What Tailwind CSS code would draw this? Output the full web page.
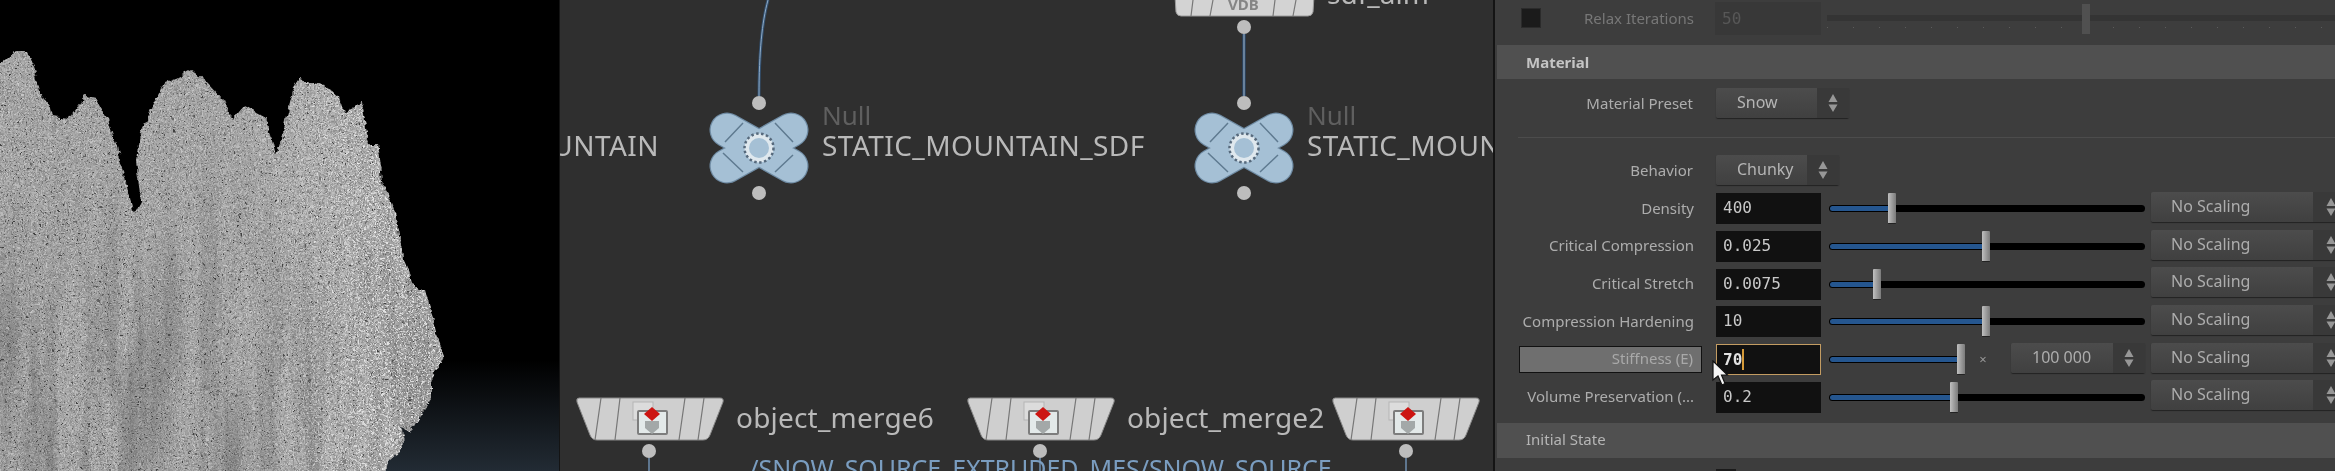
<!DOCTYPE html>
<html lang="en">
<head>
  <meta charset="UTF-8">
  <title>Houdini - Snow material</title>
  <script src="https://cdn.jsdelivr.net/npm/@tailwindcss/browser@4"></script>
</head>
<body class="bg-black overflow-hidden">
  <div class="flex w-[2335px] h-[471px] overflow-hidden blur-[0.4px] font-['Noto_Sans',sans-serif]">

    <!-- viewport -->
    <div class="w-[560px] h-full shrink-0 bg-black border-r border-[#141414]">
      <svg width="559" height="471" viewBox="0 0 559 471" class="block">
        <defs>
          <linearGradient id="floor" x1="0" y1="0" x2="0" y2="1">
            <stop offset="0" stop-color="#000"/>
            <stop offset="1" stop-color="#222b34"/>
          </linearGradient>
          <linearGradient id="shine" x1="0" y1="0" x2="1" y2="0">
            <stop offset="0.5" stop-color="#fff" stop-opacity="0"/>
            <stop offset="0.85" stop-color="#fff" stop-opacity="0.7"/>
          </linearGradient>
          <linearGradient id="fade" x1="0" y1="0" x2="0" y2="1">
            <stop offset="0.2" stop-color="#000" stop-opacity="0.05"/>
            <stop offset="0.75" stop-color="#000" stop-opacity="1"/>
          </linearGradient>
          <filter id="rough" x="-5%" y="-5%" width="110%" height="110%">
            <feTurbulence type="fractalNoise" baseFrequency="0.12" numOctaves="3" seed="3" result="wobble"/>
            <feDisplacementMap in="SourceGraphic" in2="wobble" scale="7" xChannelSelector="R" yChannelSelector="G"/>
          </filter>
          <filter id="grain" x="0" y="0" width="100%" height="100%" color-interpolation-filters="sRGB">
            <feTurbulence type="fractalNoise" baseFrequency="0.7" numOctaves="2" seed="4"/>
            <feColorMatrix type="matrix" values="1 0 0 0 0  1 0 0 0 0  1 0 0 0 0  0 0 0 0 1"/>
            <feComponentTransfer>
              <feFuncR type="linear" slope="0.5" intercept="0.4"/>
              <feFuncG type="linear" slope="0.5" intercept="0.4"/>
              <feFuncB type="linear" slope="0.5" intercept="0.4"/>
            </feComponentTransfer>
            <feComposite operator="in" in2="SourceAlpha"/>
          </filter>
          <filter id="specks" x="0" y="0" width="100%" height="100%" color-interpolation-filters="sRGB">
            <feTurbulence type="fractalNoise" baseFrequency="0.55" numOctaves="2" seed="14"/>
            <feColorMatrix type="matrix" values="0 0 0 0 0.25  0 0 0 0 0.25  0 0 0 0 0.25  7 0 0 0 -4.6"/>
            <feComposite operator="in" in2="SourceGraphic"/>
          </filter>
          <filter id="streaks" x="0" y="0" width="100%" height="100%" color-interpolation-filters="sRGB">
            <feTurbulence type="fractalNoise" baseFrequency="0.05 0.004" numOctaves="3" seed="9"/>
            <feColorMatrix type="matrix" values="0 0 0 0 0.25  0 0 0 0 0.25  0 0 0 0 0.25  0.9 0 0 0 -0.36"/>
            <feComposite operator="in" in2="SourceGraphic"/>
          </filter>
          <filter id="sparkle" x="0" y="0" width="100%" height="100%" color-interpolation-filters="sRGB">
            <feTurbulence type="fractalNoise" baseFrequency="0.6" numOctaves="2" seed="21"/>
            <feColorMatrix type="matrix" values="0 0 0 0 1  0 0 0 0 1  0 0 0 0 1  5 0 0 0 -2.5"/>
            <feComposite operator="in" in2="SourceGraphic"/>
          </filter>
          <polygon id="mountain" points="-8,72 15,52 27,52 34,67 40,92 50,107 52,116 69,118 86,96 96,98 107,117 117,147 134,215 141,202 136,160 140,133 165,82 176,78 191,70 207,82 224,100 233,119 245,105 266,117 276,155 283,133 293,90 299,80 312,83 325,85 339,97 344,113 362,103 369,145 377,145 383,187 396,213 404,257 415,287 425,290 444,357 431,380 431,400 410,432 402,428 404,447 387,463 383,480 -8,480"/>
        </defs>
        <rect x="0" y="360" width="559" height="111" fill="url(#floor)"/>
        <g filter="url(#rough)">
          <use href="#mountain" filter="url(#grain)"/>
          <use href="#mountain" fill="#000" filter="url(#specks)"/>
          <use href="#mountain" fill="url(#fade)" filter="url(#streaks)"/>
          <use href="#mountain" fill="url(#shine)" filter="url(#sparkle)"/>
        </g>
      </svg>
    </div>

    <!-- network editor: nodes sit on a free canvas -->
    <div class="relative w-[935px] h-full shrink-0 overflow-hidden bg-[#2f2f2f] border-r-2 border-[#141414] text-[#b9b9b9]">
      <svg width="933" height="471" viewBox="560 0 933 471" class="absolute left-0 top-0">
        <defs>
          <g id="nullnode">
            <path d="M-32 -18 L32 18 M32 -18 L-32 18" stroke="#6f8ba3" stroke-width="35" stroke-linecap="round"/>
            <path d="M-32 -18 L32 18 M32 -18 L-32 18" stroke="#a5c0d5" stroke-width="32.5" stroke-linecap="round"/>
            <path d="M-16 -25 L-34 -6 M16 -25 L34 -6 M-36 5 L-16 24 M34 7 L16 24" stroke="#5f7a90" stroke-width="1.5" fill="none"/>
            <circle r="14.5" fill="#dfe8ee" stroke="#56697c" stroke-width="2.5" stroke-dasharray="2.5 2.5"/>
            <circle r="10" fill="#a5c0d5"/>
          </g>
          <g id="mergenode">
            <path d="M3 0 H144 Q148 0 147 4 L134 37 Q132 42 127 42 H21 Q16 42 14 37 L1 4 Q0 0 3 0 Z" fill="#cfcfcf" stroke="#8a8a8a" stroke-width="1"/>
            <path d="M25 0 L19 42 M44 0 L39 42 M109 0 L103 42 M128 0 L122 42" stroke="#777" stroke-width="1.2" fill="none"/>
            <rect x="57" y="4" width="20" height="18" fill="#dcdcdc" stroke="#b5b5b5"/>
            <rect x="62" y="13" width="29" height="23" rx="1" fill="#e3e9e9" stroke="#7d7d7d" stroke-width="2"/>
            <path d="M69 23 H83 V30 L76 36 L69 30 Z" fill="#a3a8a8"/>
            <path d="M76 9 L84 16 L76 23 L68 16 Z" fill="#cc1512"/>
          </g>
        </defs>

        <path d="M759 96 C759 52 762 22 768 0" stroke="#33506f" stroke-width="3" fill="none"/>
        <path d="M759 96 C759 52 762 22 768 0" stroke="#8fabc6" stroke-width="1" fill="none"/>
        <path d="M1244 34 V96" stroke="#2b4767" stroke-width="3.5" fill="none"/>
        <path d="M1244 34 V96" stroke="#93aac2" stroke-width="1.2" fill="none"/>
        <path d="M649 458 V471 M1040 458 V471 M1406 458 V471" stroke="#6f8fb0" stroke-width="1.5" fill="none"/>

        <use href="#nullnode" x="759" y="148"/>
        <use href="#nullnode" x="1244" y="148"/>

        <path d="M1175 -4 H1314 L1313 12 Q1312 16 1308 16 H1181 Q1177 16 1176 12 Z" fill="#d3d3d3" stroke="#9a9a9a"/>
        <path d="M1193 0 L1191 16 M1213 0 L1210 16 M1275 0 L1273 16 M1296 0 L1293 16" stroke="#777" stroke-width="1.2" fill="none"/>

        <use href="#mergenode" x="576" y="398"/>
        <use href="#mergenode" x="967" y="398"/>
        <use href="#mergenode" x="1332" y="398"/>

        <g fill="#bdbdbd">
          <circle cx="759" cy="103" r="7"/>
          <circle cx="759" cy="193" r="7"/>
          <circle cx="1244" cy="27" r="7"/>
          <circle cx="1244" cy="103" r="7"/>
          <circle cx="1244" cy="193" r="7"/>
          <circle cx="649" cy="451" r="7"/>
          <circle cx="1040" cy="451" r="7"/>
          <circle cx="1406" cy="451" r="7"/>
        </g>
      </svg>

      <div class="absolute left-[-20px] top-[129px] w-[119px] text-[28px] leading-[32px] tracking-[0.45px] whitespace-nowrap overflow-hidden flex justify-end">STATIC_MOUNTAIN</div>
      <div class="absolute left-[262px] top-[101px] text-[26px] leading-[28px] text-[#5f5f5f]">Null</div>
      <div class="absolute left-[262px] top-[129px] text-[28px] leading-[32px] tracking-[0.45px] whitespace-nowrap">STATIC_MOUNTAIN_SDF</div>
      <div class="absolute left-[747px] top-[101px] text-[26px] leading-[28px] text-[#5f5f5f]">Null</div>
      <div class="absolute left-[747px] top-[129px] text-[28px] leading-[32px] tracking-[0.45px] whitespace-nowrap">STATIC_MOUNTAIN_SDF</div>
      <div class="absolute left-[767px] top-[-27px] text-[28px] leading-[40px] whitespace-nowrap">sdf_aim</div>
      <div class="absolute left-[668px] top-[-4px] text-[15px] leading-[16px] font-bold text-[#858585]">VDB</div>
      <div class="absolute left-[176px] top-[401px] text-[28px] leading-[32px] tracking-[0.2px] whitespace-nowrap">object_merge6</div>
      <div class="absolute left-[567px] top-[401px] text-[28px] leading-[32px] tracking-[0.15px] whitespace-nowrap">object_merge2</div>
      <div class="absolute left-[176px] top-[451px] text-[25px] leading-[34px] tracking-[-0.05px] whitespace-nowrap text-[#7a9dc0]">../SNOW_SOURCE_EXTRUDED_MES/SNOW_SOURCE</div>
    </div>

    <!-- parameter editor -->
    <div class="relative flex-1 h-full overflow-hidden bg-[#3d3d3d] text-[15px] text-[#adadad]">
      <div class="flex items-center h-[36px] pl-[26px]">
        <div class="shrink-0 w-5 h-5 bg-[#1b1b1b] border border-[#2b2b2b]"></div>
        <div class="shrink-0 w-[153px] text-right text-[#777]">Relax Iterations</div>
        <div class="shrink-0 ml-[21px] w-[106px] h-[33px] bg-[#383838] pl-[7px] leading-[33px] font-['DejaVu_Sans_Mono',monospace] text-[16px] text-[#575757]">50</div>
        <div class="relative shrink-0 ml-[6px] w-[600px] h-[30px]">
          <div class="absolute left-0 right-0 top-[12px] h-[6px] bg-[#343434]"></div>
          <div class="absolute left-0 right-0 top-[24px] h-px bg-[repeating-linear-gradient(90deg,#5c5c5c_0,#5c5c5c_1px,transparent_1px,transparent_26px)]"></div>
          <div class="absolute left-[255px] top-[1px] w-2 h-[30px] bg-[#505050]"></div>
        </div>
      </div>

      <div class="mt-[9px] ml-[2px] h-[34px] pl-[29px] bg-[#505050] leading-[34px] font-bold text-[#c4c4c4]">Material</div>

      <div class="flex items-center h-[30px] mt-[9px]">
        <div class="w-[198px] text-right">Material Preset</div>
        <div class="ml-[23px] flex w-[133px] h-[30px] rounded-[2px] bg-linear-to-b from-[#4c4c4c] to-[#404040] shadow-[0_1px_1px_#222]">
          <div class="flex-1 pl-[21px] leading-[28px] text-[16px] text-[#b5b5b5]">Snow</div>
          <div class="w-8 flex items-center justify-center bg-[#393939]">
            <svg width="10" height="20" viewBox="0 0 10 20"><path d="M5 1 L9.5 9 H0.5 Z M5 19 L9.5 11.5 H0.5 Z" fill="#979797"/></svg>
          </div>
        </div>
      </div>

      <div class="mt-[19px] ml-[23px] h-px bg-[#4c4c4c]"></div>

      <div class="flex items-center h-[30px] mt-[17px]">
        <div class="w-[198px] text-right">Behavior</div>
        <div class="ml-[23px] flex w-[123px] h-[30px] rounded-[2px] bg-linear-to-b from-[#4c4c4c] to-[#404040] shadow-[0_1px_1px_#222]">
          <div class="flex-1 pl-[21px] leading-[28px] text-[16px] text-[#b5b5b5]">Chunky</div>
          <div class="w-8 flex items-center justify-center bg-[#393939]">
            <svg width="10" height="20" viewBox="0 0 10 20"><path d="M5 1 L9.5 9 H0.5 Z M5 19 L9.5 11.5 H0.5 Z" fill="#979797"/></svg>
          </div>
        </div>
      </div>

      <div id="rows" class="mt-[5px]"></div>

      <div class="mt-[7px] ml-[2px] h-[35px] pl-[29px] bg-[#505050] leading-[33px] text-[#b5b5b5]">Initial State</div>
      <div class="mt-[11px] ml-[221px] w-5 h-5 bg-[#1b1b1b]"></div>

      <!-- mouse cursor -->
      <svg width="17" height="26" viewBox="0 0 17 26" class="absolute left-[217px] top-[360px]">
        <path d="M1 1 L1 20 L6 16 L10 25 L13 23.5 L9.5 15 L15.5 15 Z" fill="#f5f5f5" stroke="#111" stroke-width="1.2"/>
      </svg>
    </div>
  </div>

  <script>
    const params = [
      { label: "Density", value: "400", thumb: 65 },
      { label: "Critical Compression", value: "0.025", thumb: 159 },
      { label: "Critical Stretch", value: "0.0075", thumb: 50 },
      { label: "Compression Hardening", value: "10", thumb: 159 },
      { label: "Stiffness (E)", value: "70", thumb: 134, active: true },
      { label: "Volume Preservation (...", value: "0.2", thumb: 127 }
    ];

    const arrows = `<svg width="10" height="20" viewBox="0 0 10 20"><path d="M5 1 L9.5 9 H0.5 Z M5 19 L9.5 11.5 H0.5 Z" fill="#979797"/></svg>`;

    function dropdown(text, boxClass, pad, arrowClass) {
      return `<div class="flex ${boxClass} h-[30px] -mt-[4px] rounded-[2px] bg-linear-to-b from-[#4c4c4c] to-[#404040] shadow-[0_1px_1px_#222]">
        <div class="flex-1 ${pad} leading-[28px] text-[16px] text-[#adadad] whitespace-nowrap">${text}</div>
        <div class="${arrowClass} flex items-center justify-center bg-[#393939]">${arrows}</div>
      </div>`;
    }

    document.getElementById("rows").innerHTML = params.map(p => {
      const label = p.active
        ? `<div class="shrink-0 ml-[24px] w-[183px] h-[27px] pr-[8px] text-right leading-[23px] bg-[#6f6f6f] border border-[#111] text-[#a9a9a9]">${p.label}</div><div class="shrink-0 w-[14px]"></div>`
        : `<div class="shrink-0 w-[199px] text-right whitespace-nowrap -mt-[2px]">${p.label}</div><div class="shrink-0 w-[22px]"></div>`;
      const input = p.active
        ? `<div class="shrink-0 flex items-center w-[105px] h-[31px] pl-[6px] bg-[#111] border border-[#c39c62] font-['DejaVu_Sans_Mono',monospace] font-bold text-[16px] text-[#e2e2e2]">${p.value}<span class="w-[2px] h-[21px] bg-[#d59a3a]"></span></div>`
        : `<div class="shrink-0 w-[105px] h-[31px] pl-[7px] leading-[29px] bg-[#111] font-['DejaVu_Sans_Mono',monospace] text-[16px] text-[#c9c9c9]">${p.value}</div>`;
      const sliderWidth = p.active ? 138 : 318;
      const slider = `<div class="relative shrink-0 ml-[6px] h-[31px]" style="width:${sliderWidth}px">
        <div class="absolute left-[2px] right-0 top-[12px] h-[7px] rounded-full bg-black"></div>
        <div class="absolute left-[3px] top-[13px] h-[5px] rounded-l-full bg-[#25568f]" style="width:${p.thumb}px"></div>
        <div class="absolute top-0 w-2 h-[31px] rounded-[1px] bg-linear-to-r from-[#c0c0c0] to-[#7b7b7b] border-b border-[#222]" style="left:${p.thumb - 4}px"></div>
      </div>`;
      const extra = p.active
        ? `<div class="shrink-0 w-[36px] mr-[10px] text-center text-[#999] text-[13px]">×</div><div class="shrink-0">` + dropdown("100 000", "w-[134px]", "pl-[21px]", "w-8") + `</div>`
        : "";
      return `<div class="flex items-center h-[37.7px]">${label}${input}${slider}${extra}
        <div class="ml-[6px] shrink-0">${dropdown("No Scaling", "w-[198px]", "pl-[20px]", "w-[36px]")}</div>
      </div>`;
    }).join("");
  </script>
</body>
</html>
